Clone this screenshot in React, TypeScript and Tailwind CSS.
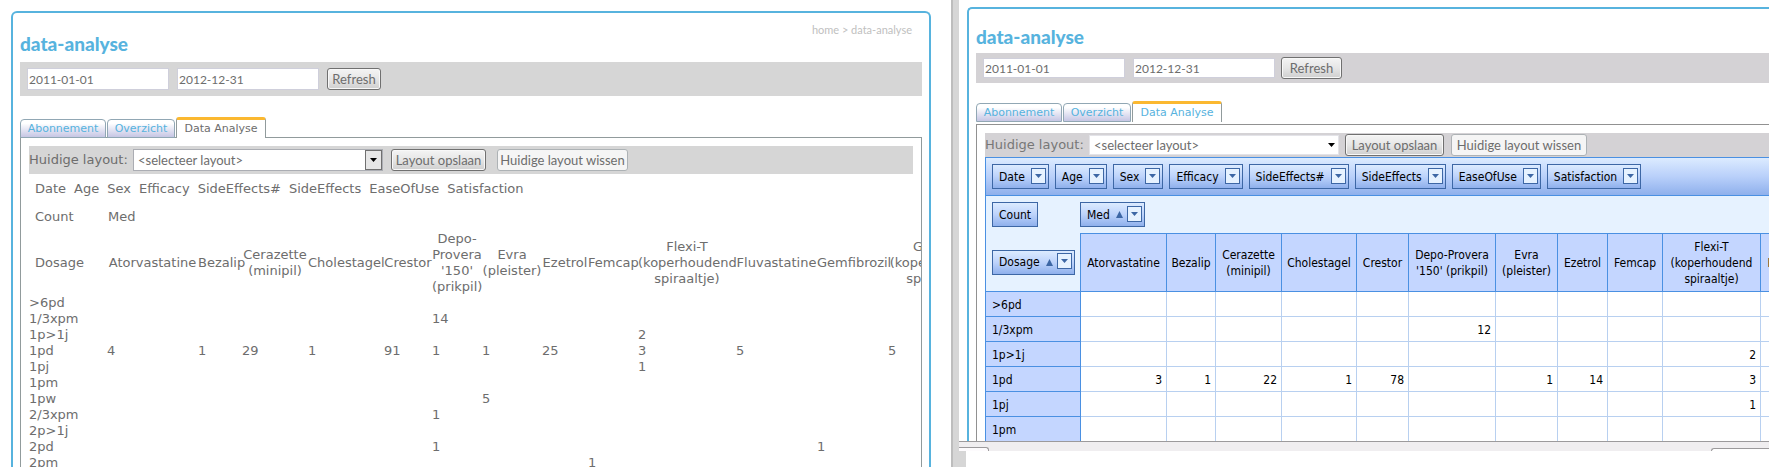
import React from 'react';

const verdana = "font-['DejaVu_Sans',sans-serif]";
const gill = "font-['Lato',sans-serif]";
const tahoma = "font-['DejaVu_Sans_Condensed','Noto_Sans',sans-serif]";

type Column = { label: string; width: string };

const leftColumns: Column[] = [
  { label: 'Atorvastatine', width: 'w-[91px]' },
  { label: 'Bezalip', width: 'w-[44px]' },
  { label: 'Cerazette (minipil)', width: 'w-[66px]' },
  { label: 'Cholestagel', width: 'w-[76px]' },
  { label: 'Crestor', width: 'w-[48px]' },
  { label: "Depo-Provera '150' (prikpil)", width: 'w-[50px]' },
  { label: 'Evra (pleister)', width: 'w-[60px]' },
  { label: 'Ezetrol', width: 'w-[46px]' },
  { label: 'Femcap', width: 'w-[50px]' },
  { label: 'Flexi-T (koperhoudend spiraaltje)', width: 'w-[98px]' },
  { label: 'Fluvastatine', width: 'w-[81px]' },
  { label: 'Gemfibrozil', width: 'w-[71px]' },
  { label: 'GyneFix (koperhoudend spiraaltje)', width: 'w-[102px]' },
];

const rightColumns: Column[] = [
  { label: 'Atorvastatine', width: 'w-[86px]' },
  { label: 'Bezalip', width: 'w-[49px]' },
  { label: 'Cerazette (minipil)', width: 'w-[66px]' },
  { label: 'Cholestagel', width: 'w-[75px]' },
  { label: 'Crestor', width: 'w-[52px]' },
  { label: "Depo-Provera '150' (prikpil)", width: 'w-[87px]' },
  { label: 'Evra (pleister)', width: 'w-[62px]' },
  { label: 'Ezetrol', width: 'w-[50px]' },
  { label: 'Femcap', width: 'w-[55px]' },
  { label: 'Flexi-T (koperhoudend spiraaltje)', width: 'w-[98px]' },
  { label: 'Fluvastatine', width: 'w-[80px]' },
];

type Row = { dosage: string; values: Record<number, number> };

const leftRows: Row[] = [
  { dosage: '>6pd', values: {} },
  { dosage: '1/3xpm', values: { 5: 14 } },
  { dosage: '1p>1j', values: { 9: 2 } },
  { dosage: '1pd', values: { 0: 4, 1: 1, 2: 29, 3: 1, 4: 91, 5: 1, 6: 1, 7: 25, 9: 3, 10: 5, 12: 5 } },
  { dosage: '1pj', values: { 9: 1 } },
  { dosage: '1pm', values: {} },
  { dosage: '1pw', values: { 6: 5 } },
  { dosage: '2/3xpm', values: { 5: 1 } },
  { dosage: '2p>1j', values: {} },
  { dosage: '2pd', values: { 5: 1, 11: 1 } },
  { dosage: '2pm', values: { 8: 1 } },
];

const rightRows: Row[] = [
  { dosage: '>6pd', values: {} },
  { dosage: '1/3xpm', values: { 5: 12 } },
  { dosage: '1p>1j', values: { 9: 2 } },
  { dosage: '1pd', values: { 0: 3, 1: 1, 2: 22, 3: 1, 4: 78, 6: 1, 7: 14, 9: 3 } },
  { dosage: '1pj', values: { 9: 1 } },
  { dosage: '1pm', values: {} },
];

const fields = ['Date', 'Age', 'Sex', 'Efficacy', 'SideEffects#', 'SideEffects', 'EaseOfUse', 'Satisfaction'];

function PushButton({ children, className = '' }: { children: React.ReactNode; className?: string }) {
  return (
    <button
      type="button"
      className={`${gill} h-[22px] shrink-0 rounded-[3px] border border-[#707070] bg-linear-to-b from-[#f4f4f4] via-[#e6e6e6] via-50% to-[#cfcfcf] text-[13px] leading-4 whitespace-nowrap text-[#6d6d6d] shadow-[inset_0_0_0_1px_#f8f8f8] ${className}`}
    >
      {children}
    </button>
  );
}

function PlainButton({ children, className = '' }: { children: React.ReactNode; className?: string }) {
  return (
    <button
      type="button"
      className={`${gill} h-[22px] shrink-0 rounded-[3px] border border-[#adb2b5] bg-[#f5f5f5] text-[13px] leading-4 whitespace-nowrap text-[#6d6d6d] ${className}`}
    >
      {children}
    </button>
  );
}

function DateInput({ value, label, className }: { value: string; label: string; className: string }) {
  return (
    <input
      type="text"
      aria-label={label}
      defaultValue={value}
      className={`${gill} border border-[#cfcfdb] bg-white pl-px text-[12px] text-[#6d6d6d] ${className}`}
    />
  );
}

function Tabs({ activeColor }: { activeColor: string }) {
  const idle =
    'h-[19px] rounded-t-[4px] border border-[#91a7b4] bg-linear-to-b from-white from-20% to-[#c6c6e4] text-[#57b3de]';
  return (
    <nav className={`${verdana} flex items-end gap-px text-[11px] leading-[18px]`}>
      <a href="#abonnement" className={`${idle} w-[86px] text-center`}>
        Abonnement
      </a>
      <a href="#overzicht" className={`${idle} w-[68px] text-center`}>
        Overzicht
      </a>
      <a
        href="#data-analyse"
        className={`h-[21px] w-[90px] rounded-t-[3px] border-x border-t-[3px] border-x-[#919b9c] border-t-[#fbb830] bg-white text-center ${activeColor}`}
      >
        Data Analyse
      </a>
    </nav>
  );
}

function Caret({ className }: { className: string }) {
  return (
    <svg viewBox="0 0 7 4" className={className} aria-hidden="true">
      <path d="M0 0H7L3.5 4Z" fill="currentColor" />
    </svg>
  );
}

function FieldButton({ label, sorted = false, menu = true }: { label: string; sorted?: boolean; menu?: boolean }) {
  return (
    <button
      type="button"
      className={`flex h-[25px] shrink-0 items-center border border-[#3d67a5] bg-linear-to-b from-[#dcebff] via-[#bdd3fb] via-50% to-[#8fb0ec] pl-1.5 text-[12px] leading-4 text-black ${menu ? 'gap-1.5 pr-0.5' : 'pr-1.5'}`}
    >
      <span>{label}</span>
      {menu && (
        <span className="flex items-center gap-1">
          {sorted && (
            <svg viewBox="0 0 7 7" className="size-[7px]" aria-hidden="true">
              <path d="M3.5 0L7 7H0Z" fill="#3d67a5" />
            </svg>
          )}
          <span className="mb-0.5 flex h-4 w-[15px] items-center justify-center border border-[#3d67a5] bg-[#e6f2ff] text-[#3d67a5]">
            <Caret className="h-1 w-[7px]" />
          </span>
        </span>
      )}
    </button>
  );
}

function LeftPane() {
  return (
    <section className="min-w-0 overflow-hidden bg-white pt-[11px] pr-5 pl-[11px]">
      <div className="h-[480px] rounded-t-[6px] border-2 border-b-0 border-[#57b3de] px-[7px]">
        <header className="flex h-[49px] items-start justify-between pr-[10px]">
          <h1 className={`${gill} pt-[19px] text-[19px] leading-6 font-black text-[#57b3de]`}>data-analyse</h1>
          <p className={`${gill} pt-[9px] text-[11px] leading-4 text-[#c0c0c0]`}>
            <a href="#home">home</a> &gt; data-analyse
          </p>
        </header>
        <form className="flex h-[34px] items-center gap-2 bg-[#d6d6d6] pl-[7px]">
          <DateInput value="2011-01-01" label="Van" className="h-[22px] w-[142px]" />
          <DateInput value="2012-12-31" label="Tot" className="h-[22px] w-[142px]" />
          <PushButton className="w-[54px]">Refresh</PushButton>
        </form>
        <div className="relative pt-[21px]">
          <Tabs activeColor="text-[#6d6d6d]" />
        </div>
        <div
          className={`${verdana} -mt-px h-[400px] overflow-hidden border border-[#919b9c] pt-2 pl-2 text-[13px] leading-4 text-[#6d6d6d]`}
        >
          <div className="mr-2 flex h-7 items-center bg-[#d6d6d6]">
            <label htmlFor="layout-left" className="w-[104px] shrink-0 whitespace-nowrap">
              Huidige layout:
            </label>
            <div className="relative mr-2 flex w-[250px] shrink-0">
              <select
                id="layout-left"
                className={`${gill} h-[22px] w-full appearance-none border border-[#abadb3] bg-white pl-1 text-[13px]`}
              >
                <option>&lt;selecteer layout&gt;</option>
              </select>
              <span className="pointer-events-none absolute inset-y-0 right-0 m-px flex w-[17px] items-center justify-center border border-[#707070] bg-[#e6e6e6] text-black">
                <Caret className="h-1 w-[7px]" />
              </span>
            </div>
            <PushButton className="mr-[11px] w-[95px]">Layout opslaan</PushButton>
            <PlainButton className="w-[131px]">Huidige layout wissen</PlainButton>
          </div>
          <div className="flex h-[29px] items-center gap-2 pl-1.5">
            {fields.map((field) => (
              <span key={field}>{field}</span>
            ))}
          </div>
          <div className="flex h-7 items-center pl-1.5">
            <span className="w-[72px]">Count</span>
            <span className="pl-px">Med</span>
          </div>
          <table className="w-[961px] table-fixed border-collapse text-left">
            <colgroup>
              <col className="w-[78px]" />
              {leftColumns.map((c) => (
                <col key={c.label} className={c.width} />
              ))}
            </colgroup>
            <thead>
              <tr className="h-16">
                <th className="p-0 pl-1.5 font-normal">Dosage</th>
                {leftColumns.map((c) => (
                  <th key={c.label} className="p-0 text-center font-normal">
                    {c.label}
                  </th>
                ))}
              </tr>
            </thead>
            <tbody>
              {leftRows.map((row) => (
                <tr key={row.dosage} className="h-4">
                  <th className="p-0 font-normal">{row.dosage}</th>
                  {leftColumns.map((c, i) => (
                    <td key={c.label} className="p-0">
                      {row.values[i]}
                    </td>
                  ))}
                </tr>
              ))}
            </tbody>
          </table>
        </div>
      </div>
    </section>
  );
}

function RightPane() {
  return (
    <section className="flex min-w-0 flex-col overflow-hidden bg-white">
      <div className="min-h-0 flex-1 overflow-hidden pt-[7px] pl-2">
        <div className="h-[440px] rounded-tl-[5px] border-t-2 border-l-2 border-[#57b3de] pl-[7px]">
          <h1 className={`${gill} h-11 pt-4 text-[19px] leading-6 font-black text-[#57b3de]`}>data-analyse</h1>
          <form className="flex h-[30px] items-center gap-2 bg-[#d4d2d5] pl-[7px]">
            <DateInput value="2011-01-01" label="Van" className="h-5 w-[142px]" />
            <DateInput value="2012-12-31" label="Tot" className="h-5 w-[142px]" />
            <PushButton className="-ml-0.5 w-[61px]">Refresh</PushButton>
          </form>
          <div className="pt-[18px] pb-0.5">
            <Tabs activeColor="text-[#57b3de]" />
          </div>
          <div className="h-[330px] border-t border-l border-[#919191] pt-2 pl-2">
            <div className="flex h-6 items-center bg-[#d4d2d5]">
              <label
                htmlFor="layout-right"
                className={`${verdana} w-[104px] shrink-0 text-[13px] leading-4 whitespace-nowrap text-[#777]`}
              >
                Huidige layout:
              </label>
              <div className="relative mr-1.5 flex w-[250px] shrink-0">
                <select
                  id="layout-right"
                  className={`${gill} h-5 w-full appearance-none border border-[#e3e3e8] bg-white pl-1 text-[13px] text-[#6d6d6d]`}
                >
                  <option>&lt;selecteer layout&gt;</option>
                </select>
                <span className="pointer-events-none absolute inset-y-0 right-1 flex items-center text-black">
                  <Caret className="h-1 w-[7px]" />
                </span>
              </div>
              <PushButton className="mr-[7px] w-[99px]">Layout opslaan</PushButton>
              <PlainButton className="w-[136px]">Huidige layout wissen</PlainButton>
            </div>
            <div className={`${tahoma} border-l border-[#4a90e2] bg-[#e6f2ff] text-[12px] leading-4 text-black`}>
              <div className="flex h-[39px] items-center gap-1.5 overflow-hidden border-y border-[#4a90e2] bg-linear-to-b from-[#dcebff] via-[#b9d0fa] via-50% to-[#8fb0ec] pl-1.5">
                {fields.map((field) => (
                  <FieldButton key={field} label={field} />
                ))}
              </div>
              <div className="flex h-[37px] items-center pl-1.5">
                <div className="w-[88px]">
                  <FieldButton label="Count" menu={false} />
                </div>
                <FieldButton label="Med" sorted />
              </div>
              <table className="w-[855px] table-fixed border-separate border-spacing-0">
                <colgroup>
                  <col className="w-[95px]" />
                  {rightColumns.map((c) => (
                    <col key={c.label} className={c.width} />
                  ))}
                </colgroup>
                <thead>
                  <tr className="h-[59px]">
                    <th className="border-r border-b border-[#4a90e2] p-0 pl-1.5 font-normal">
                      <FieldButton label="Dosage" sorted />
                    </th>
                    {rightColumns.map((c) => (
                      <th
                        key={c.label}
                        className="border-t border-r border-b border-[#4a90e2] bg-[#c4d6ff] p-0 px-1 text-center font-normal"
                      >
                        {c.label}
                      </th>
                    ))}
                  </tr>
                </thead>
                <tbody>
                  {rightRows.map((row) => (
                    <tr key={row.dosage} className="h-[25px]">
                      <th className="border-r border-b border-[#4a90e2] bg-[#c4d6ff] p-0 pt-0.5 pl-1.5 text-left font-normal">
                        {row.dosage}
                      </th>
                      {rightColumns.map((c, i) => (
                        <td
                          key={c.label}
                          className="border-r border-b border-[#b8d0f0] bg-white p-0 pt-0.5 pr-1 text-right"
                        >
                          {row.values[i]}
                        </td>
                      ))}
                    </tr>
                  ))}
                </tbody>
              </table>
            </div>
          </div>
        </div>
      </div>
      <footer>
        <div className="flex h-[10px] items-end justify-between border-t border-[#9c9a9c] bg-[#f0eef0]">
          <span className="h-1 w-[30px] rounded-tr-[3px] border-t border-r border-[#9c9a9c] bg-[#fdfbfd]" />
          <span className="h-[3px] w-[58px] rounded-tl-[3px] border-t border-l border-[#9c9a9c] bg-white" />
        </div>
        <div className="h-4 border-l-[7px] border-[#d6d6d6] bg-white" />
      </footer>
    </section>
  );
}

export default function App() {
  return (
    <main className="grid h-screen grid-cols-[951fr_8px_810fr] overflow-hidden bg-white">
      <LeftPane />
      <div className="border-l-2 border-[#bdbdbd] bg-[#d6d6d6]" />
      <RightPane />
    </main>
  );
}
